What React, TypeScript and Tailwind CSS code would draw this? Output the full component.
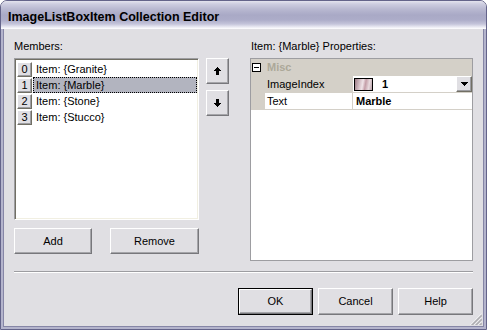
const F = "[font-family:'Liberation_Sans',Arial,sans-serif]";

function Btn({
  children,
  w,
  h,
  def,
}: {
  children: React.ReactNode;
  w: string;
  h: string;
  def?: boolean;
}) {
  return (
    <div className={`${w} ${h} ${def ? "border border-black" : ""} flex shrink-0`}>
      <div className="flex-1 flex items-center justify-center bg-[#e0dfe3] border border-t-white border-l-white border-r-[#77777b] border-b-[#77777b] shadow-[inset_-1px_-1px_0_#a5a5a9] text-[11px] leading-[13px] text-black">
        {children}
      </div>
    </div>
  );
}

function Arrow({ down }: { down?: boolean }) {
  return (
    <svg width="7" height="8" viewBox="0 0 7 8" className={down ? "rotate-180" : ""}>
      <path d="M3 0h1v1h1v1h1v1h1v1H5v4H2V4H0V3h1V2h1V1h1z" fill="#000" />
    </svg>
  );
}

const items = ["Item: {Granite}", "Item: {Marble}", "Item: {Stone}", "Item: {Stucco}"];

export default function App() {
  return (
    <div className={`${F} w-[487px] h-[330px] flex flex-col rounded-t-[7px] border border-[#64648a] bg-[#e0dfe3] overflow-hidden text-black`}>
      {/* Title bar */}
      <div className="h-[28px] shrink-0 bg-[linear-gradient(to_bottom,#e4e4ee_0px,#cdcde0_3px,#b9b9d1_8px,#a9a9c6_14px,#adadc9_19px,#c4c4da_23px,#eaeaf3_26px,#ffffff_28px)] pl-[7px] pt-[9px]">
        <div className="text-[12.5px] leading-[15px] font-bold text-black">ImageListBoxItem Collection Editor</div>
      </div>
      {/* Body frame */}
      <div className="flex-1 flex border-x-2 border-b-2 border-[#b4b4cc]">
        <div className="relative flex-1 flex flex-col border-x border-b border-[#8686a6] px-[10px] pt-[11px]">
          <div className="flex items-start">
            {/* Left column */}
            <div className="w-[185px] flex flex-col">
              <div className="h-[13px] text-[11px] leading-[13px]">Members:</div>
              <div className="mt-[5px] h-[162px] bg-white border border-t-[#9d9da1] border-l-[#9d9da1] border-r-white border-b-white shadow-[inset_1px_1px_0_#716f64,inset_-1px_-1px_0_#f1efe2] p-[1px] pt-[2px] pl-[2px]">
                {items.map((t, i) => (
                  <div key={i} className="flex h-[16px]">
                    <div className="w-[15px] h-[15px] mt-[1px] shrink-0 bg-[#e0dfe3] border border-t-white border-l-white border-r-[#716f64] border-b-[#716f64] shadow-[inset_-1px_-1px_0_#9d9da1] flex items-center justify-center text-[11px] leading-[13px]">
                      {i}
                    </div>
                    <div
                      className={`flex-1 ml-[1px] pl-[2px] text-[11px] leading-[14px] border ${
                        i === 1 ? "bg-[#b2b4bf] border-dotted border-black" : "border-transparent"
                      }`}
                    >
                      {t}
                    </div>
                  </div>
                ))}
              </div>
              <div className="mt-[8px] flex gap-[18px]">
                <Btn w="w-[78px]" h="h-[26px]">Add</Btn>
                <Btn w="w-[89px]" h="h-[26px]">Remove</Btn>
              </div>
            </div>
            {/* Arrow buttons */}
            <div className="ml-[7px] pt-[18px] flex flex-col gap-[6px]">
              <Btn w="w-[23px]" h="h-[26px]">
                <Arrow />
              </Btn>
              <Btn w="w-[23px]" h="h-[26px]">
                <Arrow down />
              </Btn>
            </div>
            {/* Right column */}
            <div className="ml-[21px] w-[223px] flex flex-col">
              <div className="h-[13px] text-[11px] leading-[13px] pl-[1px]">Item: {"{Marble}"} Properties:</div>
              <div className="mt-[5px] h-[203px] bg-white border border-[#9d9da1] flex flex-col">
                {/* Category row */}
                <div className="h-[17px] bg-[#d4d0c8] flex items-center">
                  <div className="ml-[1px] w-[9px] h-[9px] border border-black bg-white flex items-center justify-center">
                    <div className="w-[5px] h-[1px] bg-black" />
                  </div>
                  <div className="ml-[6px] text-[11px] leading-[13px] font-bold text-[#aca899]">Misc</div>
                </div>
                {/* ImageIndex row */}
                <div className="flex h-[17px]">
                  <div className="w-[14px] bg-[#d4d0c8]" />
                  <div className="w-[88px] bg-[#d4d0c8] border-r border-[#d4d0c8] pl-[2px] text-[11px] leading-[16px]">ImageIndex</div>
                  <div className="flex-1 bg-white border-b border-[#d4d0c8] flex items-center pl-[1px]">
                    <div className="w-[19px] h-[13px] border border-black bg-[linear-gradient(100deg,#9c7c86_0%,#d8c4ca_30%,#f0e4e8_45%,#c49ea8_60%,#e8dade_80%,#b8a0a8_100%)]" />
                    <div className="ml-[9px] text-[11px] leading-[13px] font-bold flex-1">1</div>
                    <div className="w-[16px] h-[16px] bg-[#e0dfe3] border border-t-white border-l-white border-r-[#716f64] border-b-[#716f64] shadow-[inset_-1px_-1px_0_#9d9da1] flex items-center justify-center">
                      <svg width="7" height="4" viewBox="0 0 7 4">
                        <path d="M0 0h7v1H6v1H5v1H4v1H3V3H2V2H1V1H0z" fill="#000" />
                      </svg>
                    </div>
                  </div>
                </div>
                {/* Text row */}
                <div className="flex h-[17px]">
                  <div className="w-[14px] bg-[#d4d0c8]" />
                  <div className="w-[88px] bg-white border-r border-b border-[#d4d0c8] pl-[2px] text-[11px] leading-[16px]">Text</div>
                  <div className="flex-1 bg-white border-b border-[#d4d0c8] pl-[3px] text-[11px] leading-[16px] font-bold">Marble</div>
                </div>
              </div>
            </div>
          </div>
          {/* Separator */}
          <div className="mt-[10px] h-[2px] border-t border-[#9d9da1] border-b border-b-white" />
          {/* Bottom buttons */}
          <div className="mt-[15px] flex justify-end gap-[5px]">
            <Btn w="w-[75px]" h="h-[27px]" def>
              OK
            </Btn>
            <Btn w="w-[75px]" h="h-[27px]">Cancel</Btn>
            <Btn w="w-[75px]" h="h-[27px]">Help</Btn>
          </div>
          {/* Resize grip */}
          <svg className="absolute right-[1px] bottom-[1px]" width="12" height="12" viewBox="0 0 12 12">
            {[0, 4, 8].map((o) => (
              <g key={o}>
                <line x1={12} y1={o + 0.5} x2={o + 0.5} y2={12} stroke="#ffffff" strokeWidth="1" />
                <line x1={12} y1={o + 1.5} x2={o + 1.5} y2={12} stroke="#9d9da1" strokeWidth="1" />
                <line x1={12} y1={o + 2.5} x2={o + 2.5} y2={12} stroke="#9d9da1" strokeWidth="1" />
              </g>
            ))}
          </svg>
        </div>
      </div>
    </div>
  );
}
